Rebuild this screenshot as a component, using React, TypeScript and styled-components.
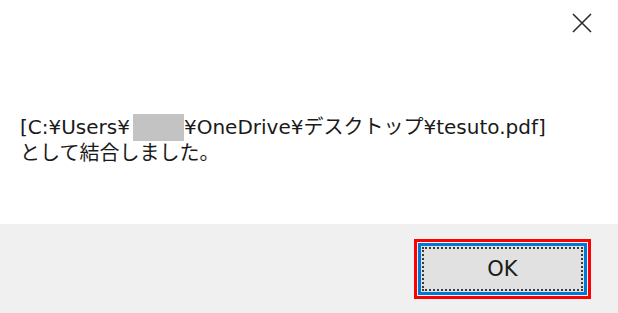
import React from "react";
import styled, { createGlobalStyle } from "styled-components";

const GlobalStyle = createGlobalStyle`
  html, body {
    margin: 0;
    padding: 0;
    background: #ffffff;
  }
  body {
    font-family: "DejaVu Sans", "Noto Sans CJK JP", sans-serif;
  }
`;

const Dialog = styled.div`
  width: 618px;
  height: 313px;
  display: flex;
  flex-direction: column;
  overflow: hidden;
`;

const Body = styled.div`
  height: 224px;
  background: #ffffff;
  display: flex;
  flex-direction: column;
`;

const TitleBar = styled.div`
  height: 46px;
  display: flex;
  justify-content: flex-end;
  align-items: center;
  padding-right: 24px;
`;

const CloseButton = styled.button`
  width: 24px;
  height: 24px;
  padding: 0;
  border: none;
  background: transparent;
  display: flex;
  align-items: center;
  justify-content: center;
  color: #2b2b2b;
`;

const Message = styled.div`
  padding: 68px 0 0 20px;
  font-family: "DejaVu Sans", "Noto Sans CJK JP", sans-serif;
  font-size: 20px;
  line-height: 25px;
  color: #1a1a1a;
`;

const Line = styled.div`
  display: flex;
  align-items: center;
  white-space: nowrap;
`;

const Redacted = styled.span`
  display: inline-block;
  width: 51px;
  height: 27px;
  margin-left: 3px;
  background: #c3c3c3;
`;

const Footer = styled.div`
  flex: 1;
  background: #f0f0f0;
  display: flex;
  justify-content: flex-end;
  align-items: flex-start;
  padding: 15px 27px 0 0;
`;

const Highlight = styled.div`
  border: 3px solid #ff0000;
  padding: 1px;
  display: flex;
`;

const OkButton = styled.button`
  width: 169px;
  height: 52px;
  box-sizing: border-box;
  border: 3px solid #0078d7;
  background: #e1e1e1;
  padding: 1px;
  display: flex;
  font-family: "DejaVu Sans", "Noto Sans CJK JP", sans-serif;
`;

const FocusRing = styled.span`
  flex: 1;
  border: 2px dotted #3a3a3a;
  display: flex;
  align-items: center;
  justify-content: center;
  font-size: 21px;
  color: #1a1a1a;
`;

const App = () => {
  return (
    <>
      <GlobalStyle />
      <Dialog>
        <Body>
          <TitleBar>
            <CloseButton aria-label="閉じる">
              <svg width="20" height="20" viewBox="0 0 20 20">
                <path
                  d="M1 1 L19 19 M19 1 L1 19"
                  stroke="currentColor"
                  strokeWidth="1.6"
                  fill="none"
                />
              </svg>
            </CloseButton>
          </TitleBar>
          <Message>
            <Line>
              [C:¥Users¥
              <Redacted />
              ¥OneDrive¥デスクトップ¥tesuto.pdf]
            </Line>
            <Line>として結合しました。</Line>
          </Message>
        </Body>
        <Footer>
          <Highlight>
            <OkButton>
              <FocusRing>OK</FocusRing>
            </OkButton>
          </Highlight>
        </Footer>
      </Dialog>
    </>
  );
};

export default App;
